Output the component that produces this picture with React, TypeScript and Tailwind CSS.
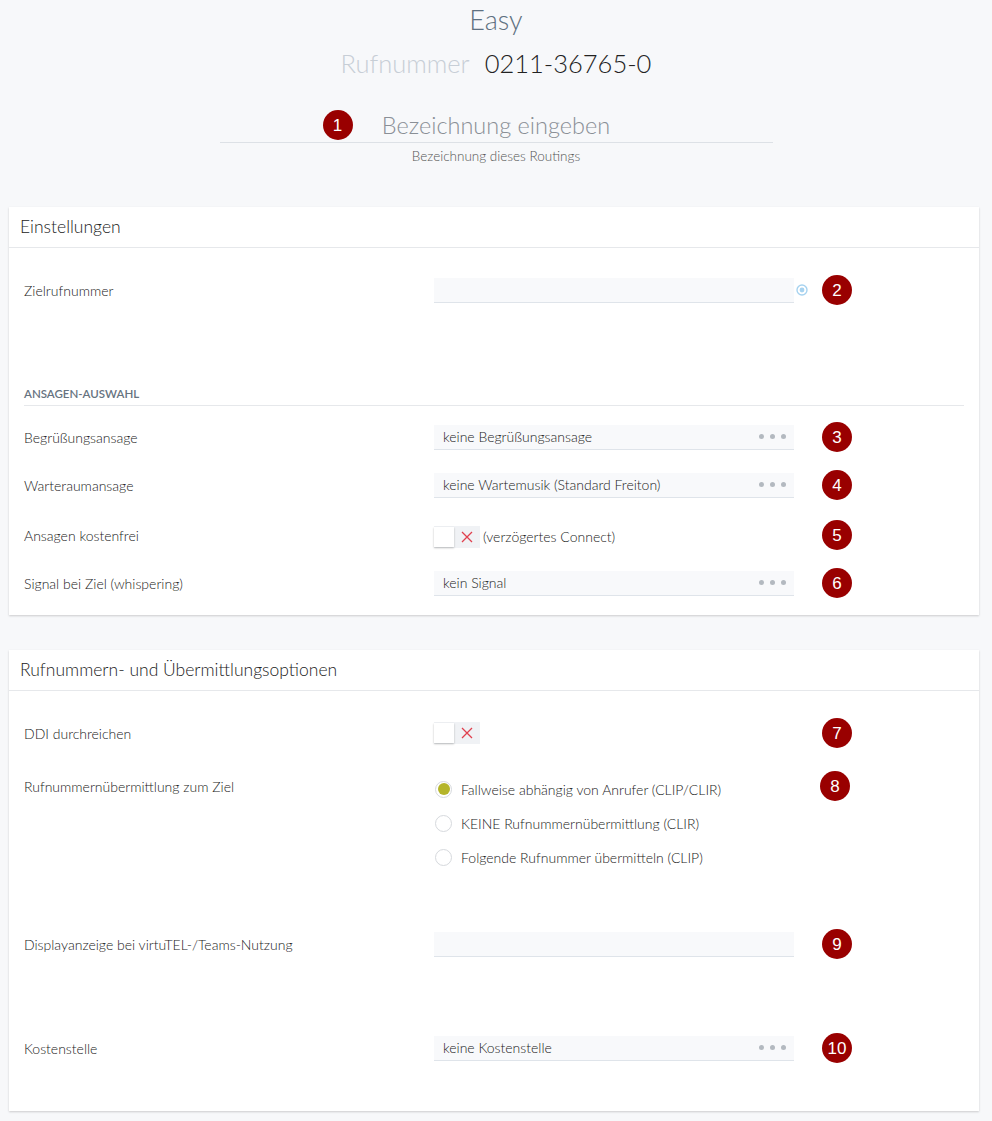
import React from "react";

const Badge = ({ n }: { n: number }) => (
  <div className="flex h-[30px] w-[30px] shrink-0 items-center justify-center rounded-full bg-[#990000] font-['Liberation_Sans',Arial,sans-serif] text-[17px] leading-none text-white">
    {n}
  </div>
);

const Dots = () => (
  <div className="flex items-center gap-[6px] pr-[8px]">
    <span className="h-[5px] w-[5px] rounded-full bg-[#b3b9c0]" />
    <span className="h-[5px] w-[5px] rounded-full bg-[#b3b9c0]" />
    <span className="h-[5px] w-[5px] rounded-full bg-[#b3b9c0]" />
  </div>
);

const Field = ({ value, dots }: { value?: string; dots?: boolean }) => (
  <div className="flex h-[25px] w-[360px] items-center justify-between border-b border-[#dfe4ea] bg-[#f8f9fb] pl-[9px] text-[14px] font-light text-[#222]">
    <span>{value}</span>
    {dots && <Dots />}
  </div>
);

const Toggle = () => (
  <div className="flex h-[22px] w-[46px] items-center bg-[#f0f2f5]">
    <div className="h-[20px] w-[20px] bg-white shadow-[0_1px_2px_rgba(0,0,0,0.25)]" />
    <svg className="ml-[7px]" width="12" height="12" viewBox="0 0 12 12">
      <path d="M1 1L11 11M11 1L1 11" stroke="#e0404e" strokeWidth="1.3" />
    </svg>
  </div>
);

const Radio = ({ checked, label }: { checked?: boolean; label: string }) => (
  <div className="flex h-[24px] items-center">
    <div className="flex h-[17px] w-[17px] items-center justify-center rounded-full border border-[#d6d9dd] bg-white">
      {checked && <div className="h-[12px] w-[12px] rounded-full bg-[#b5b52a]" />}
    </div>
    <span className="ml-[9px] text-[14px] font-light text-[#222]">{label}</span>
  </div>
);

// label | control | spare | badge
const Row = ({
  label,
  badge,
  children,
  extra,
  className = "",
}: {
  label: string;
  badge: number;
  children: React.ReactNode;
  extra?: React.ReactNode;
  className?: string;
}) => (
  <div className={`flex h-[30px] items-center ${className}`}>
    <div className="w-[410px] text-[14px] font-light text-[#222]">{label}</div>
    <div className="w-[360px]">{children}</div>
    <div className="flex w-[28px] pl-[2px]">{extra}</div>
    <Badge n={badge} />
  </div>
);

const Target = () => (
  <svg width="12" height="12" viewBox="0 0 12 12">
    <circle cx="6" cy="6" r="5" fill="none" stroke="#a7d3f0" strokeWidth="1.4" />
    <circle cx="6" cy="6" r="2.4" fill="#a7d3f0" />
  </svg>
);

const Card = ({ title, children, className = "" }: { title: string; children: React.ReactNode; className?: string }) => (
  <section className={`ml-[9px] mr-[13px] bg-white shadow-[0_1px_2px_rgba(0,0,0,0.18)] ${className}`}>
    <h2 className="flex h-[41px] items-center border-b border-[#e6e8eb] px-[11px] text-[17.5px] font-light text-[#222]">
      {title}
    </h2>
    <div className="px-[15px]">{children}</div>
  </section>
);

export default function App() {
  return (
    <div className="min-h-[1121px] bg-[#f7f8fa] pb-[10px] font-['Lato',sans-serif] text-[#333]">
      <header className="flex flex-col items-center pt-[4px]">
        <h1 className="h-[32px] text-[27px] font-light leading-[32px] text-[#5e7080]">Easy</h1>
        <div className="mt-[11px] flex h-[32px] items-baseline gap-[15px] text-[25.5px] font-light leading-[32px]">
          <span className="text-[#c7ced6]">Rufnummer</span>
          <span className="text-[#222]">0211-36765-0</span>
        </div>
        <div className="relative mt-[30px] flex h-[34px] w-[553px] items-center justify-center border-b border-[#dde1e6]">
          <div className="absolute left-[103px] top-[1px]">
            <Badge n={1} />
          </div>
          <span className="text-[23.5px] font-light text-[#8a8f96]">Bezeichnung eingeben</span>
        </div>
        <p className="mt-[3px] text-[13.5px] font-light text-[#555]">Bezeichnung dieses Routings</p>
      </header>

      <Card title="Einstellungen" className="mt-[41px]">
        <Row label="Zielrufnummer" badge={2} className="mt-[27px]" extra={<Target />}>
          <Field />
        </Row>
        <div className="mt-[82px] border-b border-[#e6e8eb] pb-[4px] text-[11.5px] font-semibold uppercase leading-[14px] text-[#66737f]">
          Ansagen-Auswahl
        </div>
        <Row label="Begrüßungsansage" badge={3} className="mt-[16px]">
          <Field value="keine Begrüßungsansage" dots />
        </Row>
        <Row label="Warteraumansage" badge={4} className="mt-[18px]">
          <Field value="keine Wartemusik (Standard Freiton)" dots />
        </Row>
        <Row label="Ansagen kostenfrei" badge={5} className="mt-[20px]">
          <div className="flex items-center pt-[3px]">
            <Toggle />
            <span className="ml-[3px] text-[14px] font-light text-[#222]">(verzögertes Connect)</span>
          </div>
        </Row>
        <Row label="Signal bei Ziel (whispering)" badge={6} className="mt-[18px]">
          <Field value="kein Signal" dots />
        </Row>
        <div className="h-[17px]" />
      </Card>

      <Card title="Rufnummern- und Übermittlungsoptionen" className="mt-[35px]">
        <Row label="DDI durchreichen" badge={7} className="mt-[27px]">
          <Toggle />
        </Row>
        <div className="mt-[29px] flex items-start">
          <div className="w-[410px] pt-[2px] text-[14px] font-light leading-[16px] text-[#222]">
            Rufnummernübermittlung zum Ziel
          </div>
          <div className="flex w-[360px] flex-col gap-[10px] pl-[1px]">
            <Radio checked label="Fallweise abhängig von Anrufer (CLIP/CLIR)" />
            <Radio label="KEINE Rufnummernübermittlung (CLIR)" />
            <Radio label="Folgende Rufnummer übermitteln (CLIP)" />
          </div>
          <div className="w-[26px]" />
          <div className="-mt-[6px]">
            <Badge n={8} />
          </div>
        </div>
        <Row label="Displayanzeige bei virtuTEL-/Teams-Nutzung" badge={9} className="mt-[60px]">
          <Field />
        </Row>
        <Row label="Kostenstelle" badge={10} className="mt-[74px]">
          <Field value="keine Kostenstelle" dots />
        </Row>
        <div className="h-[48px]" />
      </Card>
    </div>
  );
}
